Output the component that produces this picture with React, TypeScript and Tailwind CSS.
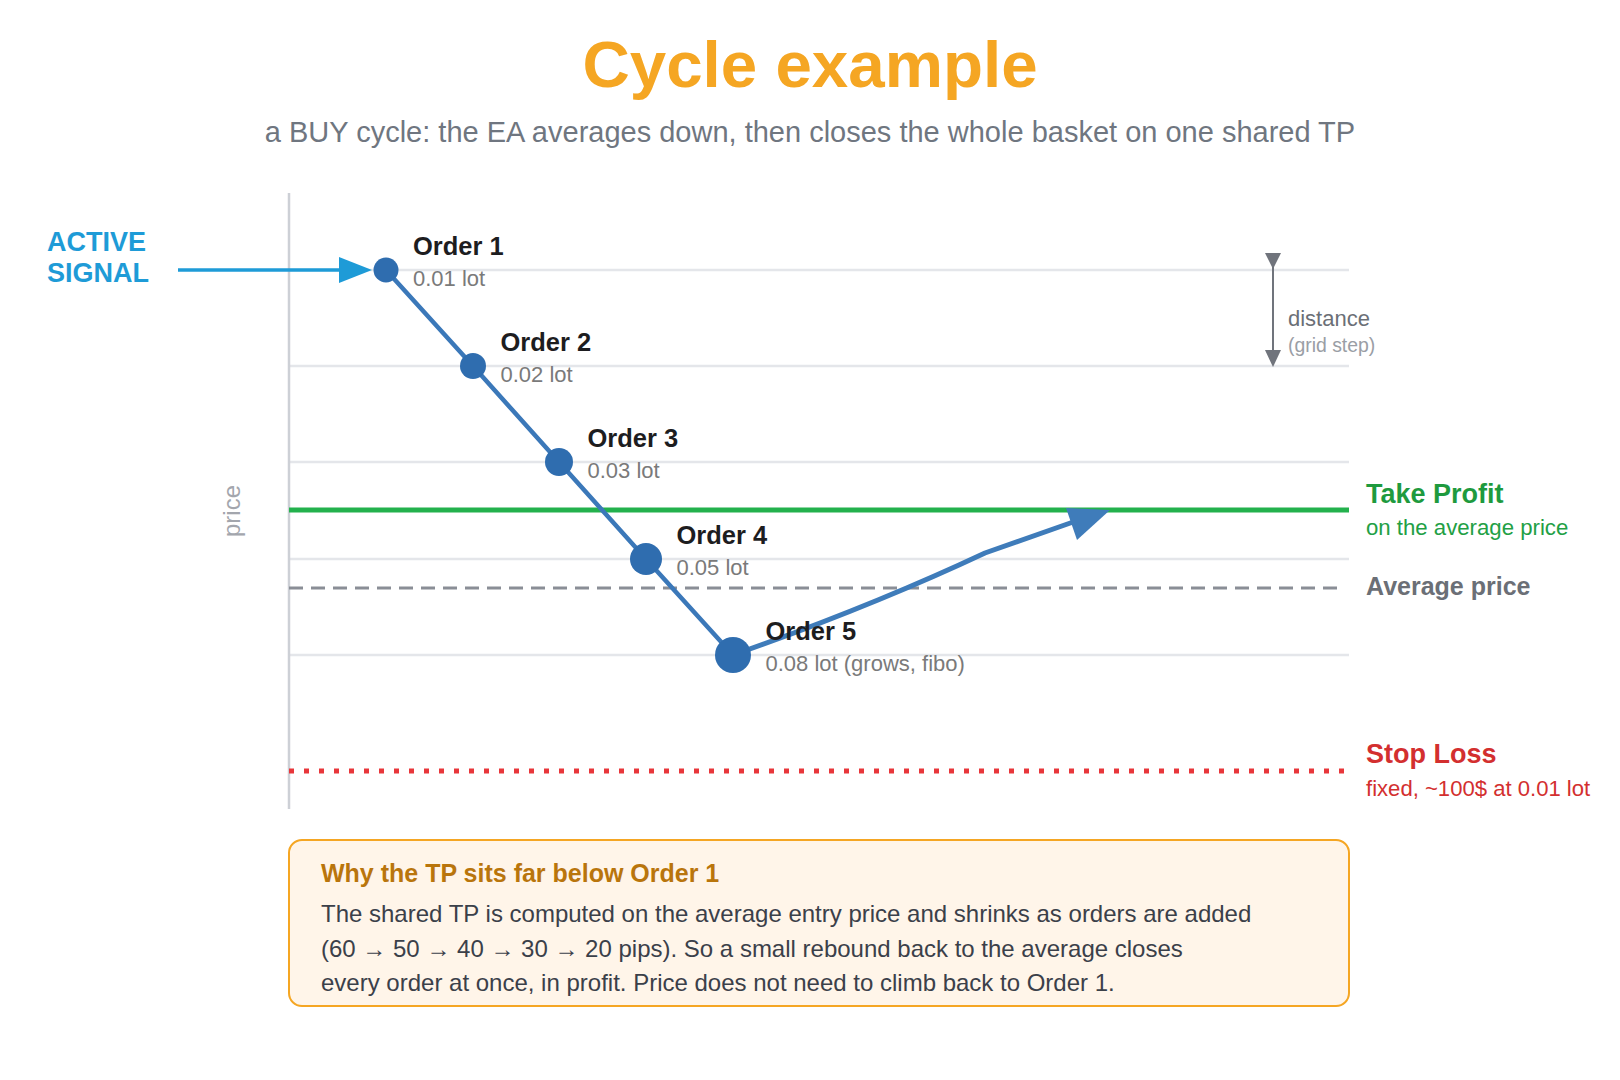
const orders = [
  { x: 386, y: 270, r: 12.5, name: 'Order 1', lot: '0.01 lot' },
  { x: 473, y: 366, r: 13, name: 'Order 2', lot: '0.02 lot' },
  { x: 559, y: 462, r: 14, name: 'Order 3', lot: '0.03 lot' },
  { x: 646, y: 559, r: 16, name: 'Order 4', lot: '0.05 lot' },
  { x: 733, y: 655, r: 18, name: 'Order 5', lot: '0.08 lot (grows, fibo)' },
];

const gridRows = [270, 366, 462, 559, 655];

/** Price chart: grid, order path, TP / average / SL levels and their labels. */
function CycleChart() {
  const path = orders.map((o) => `${o.x},${o.y}`).join(' ');

  return (
    <svg className="mt-[35px] block" width="1620" height="640" viewBox="0 180 1620 640">
      {/* grid rows */}
      {gridRows.map((y) => (
        <line key={y} x1="289" y1={y} x2="1349" y2={y} stroke="#e4e6ea" strokeWidth="2.5" />
      ))}

      {/* price axis */}
      <line x1="289" y1="193" x2="289" y2="809" stroke="#cdd0d6" strokeWidth="2.5" />
      <text
        x="240"
        y="511"
        fontSize="24"
        fill="#a3a6ad"
        textAnchor="middle"
        transform="rotate(-90 240 511)"
      >
        price
      </text>

      {/* levels */}
      <line x1="289" y1="510" x2="1349" y2="510" stroke="#23b14d" strokeWidth="5" />
      <line
        x1="289"
        y1="588"
        x2="1345"
        y2="588"
        stroke="#8a8e96"
        strokeWidth="3"
        strokeDasharray="14 8"
      />
      <line
        x1="289"
        y1="771"
        x2="1345"
        y2="771"
        stroke="#e8363a"
        strokeWidth="5"
        strokeDasharray="5 10"
      />

      {/* active signal */}
      <text fontSize="27" fontWeight="700" fill="#1e9bd7">
        <tspan x="47" y="251">ACTIVE</tspan>
        <tspan x="47" y="282">SIGNAL</tspan>
      </text>
      <line x1="178" y1="270" x2="342" y2="270" stroke="#1e9bd7" strokeWidth="3.5" />
      <polygon points="339,257 372,270 339,283" fill="#1e9bd7" />

      {/* averaging down path + rebound */}
      <polyline points={path} fill="none" stroke="#3b78b9" strokeWidth="4.5" strokeLinejoin="round" />
      <path
        d="M733 655 Q 870 607 985 553 L 1076 521"
        fill="none"
        stroke="#3f7cba"
        strokeWidth="5"
        strokeLinecap="round"
      />
      <polygon points="1066,508 1110,510 1077,540" fill="#3f7cba" />

      {orders.map((o) => (
        <g key={o.name}>
          <circle cx={o.x} cy={o.y} r={o.r} fill="#2f6daf" />
          <text x={o.x + o.r + 14.5} y={o.y - 15} fontSize="25.5" fontWeight="700" fill="#1d1d1f">
            {o.name}
          </text>
          <text x={o.x + o.r + 14.5} y={o.y + 16} fontSize="22" fill="#7a7a7a">
            {o.lot}
          </text>
        </g>
      ))}

      {/* grid step marker */}
      <line x1="1273" y1="266" x2="1273" y2="352" stroke="#70747c" strokeWidth="2" />
      <polygon points="1265,253 1281,253 1273,269" fill="#70747c" />
      <polygon points="1265,350 1281,350 1273,367" fill="#70747c" />
      <text x="1288" y="326" fontSize="22" fill="#6b6f76">
        distance
      </text>
      <text x="1288" y="352" fontSize="19.4" fill="#9a9ea5">
        (grid step)
      </text>

      {/* level labels */}
      <text x="1366" y="503" fontSize="27" fontWeight="700" fill="#1e9a3e">
        Take Profit
      </text>
      <text x="1366" y="535" fontSize="22.2" fill="#22a045">
        on the average price
      </text>
      <text x="1366" y="595" fontSize="25" fontWeight="700" fill="#6b6f76">
        Average price
      </text>
      <text x="1366" y="763" fontSize="27" fontWeight="700" fill="#d32f2f">
        Stop Loss
      </text>
      <text x="1366" y="796" fontSize="22.1" fill="#d32f2f">
        fixed, ~100$ at 0.01 lot
      </text>
    </svg>
  );
}

export default function App() {
  return (
    <div className="min-h-screen w-full bg-white font-['Liberation_Sans',Arial,sans-serif]">
      <h1 className="pt-[33px] text-center text-[65.5px] font-bold leading-[64px] text-[#f5a623]">
        Cycle example
      </h1>
      <p className="mt-[22px] text-center text-[29px] leading-[26px] text-[#6f7680]">
        a BUY cycle: the EA averages down, then closes the whole basket on one shared TP
      </p>

      <CycleChart />

      {/* Explanation note */}
      <div className="mt-[19px] ml-[288px] w-[1062px] rounded-[14px] border-2 border-[#f5a623] bg-[#fff5e9] px-[31px] pt-4 pb-1">
        <h2 className="text-[25px] font-bold leading-[32px] text-[#b9750c]">
          Why the TP sits far below Order 1
        </h2>
        <p className="mt-2 text-[24px] leading-[34.5px] text-[#3b4049]">
          The shared TP is computed on the average entry price and shrinks as orders are added
          <br />
          (60 → 50 → 40 → 30 → 20 pips). So a small rebound back to the average closes
          <br />
          every order at once, in profit. Price does not need to climb back to Order 1.
        </p>
      </div>
    </div>
  );
}
